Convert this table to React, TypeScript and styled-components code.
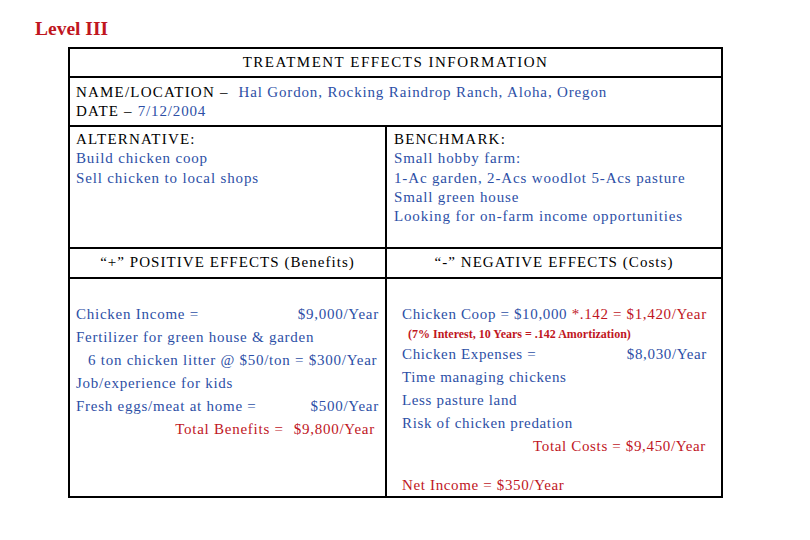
import React from "react";
import styled, { createGlobalStyle } from "styled-components";

const Global = createGlobalStyle`
  html, body { margin: 0; padding: 0; background: #ffffff; }
  body { font-family: "Liberation Serif", "Times New Roman", serif; color: #000; }
`;

const BLUE = "#2d4fa6";
const RED = "#c0161e";

const Page = styled.div`
  width: 810px;
  height: 540px;
  padding: 19px 0 0 35px;
  box-sizing: border-box;
  display: flex;
  flex-direction: column;
`;

const Heading = styled.h1`
  margin: 0;
  font-size: 19.5px;
  line-height: 20px;
  font-weight: bold;
  color: ${RED};
  height: 28px;
`;

const Table = styled.div`
  margin-left: 33px;
  width: 655px;
  box-sizing: border-box;
  border: 2px solid #000;
  display: flex;
  flex-direction: column;
  font-size: 15px;
  letter-spacing: 1.2px;
`;

const TitleRow = styled.div`
  height: 27px;
  border-bottom: 2px solid #000;
  display: flex;
  align-items: center;
  justify-content: center;
  letter-spacing: 1.5px;
`;

const InfoRow = styled.div`
  height: 49px;
  border-bottom: 2px solid #000;
  padding: 5px 6px 0;
  box-sizing: border-box;
  line-height: 18.5px;
`;

const SplitRow = styled.div<{ $h: number; $last?: boolean }>`
  display: grid;
  grid-template-columns: 317px 1fr;
  height: ${(p) => p.$h}px;
  border-bottom: ${(p) => (p.$last ? "none" : "2px solid #000")};
`;

const Cell = styled.div<{ $center?: boolean; $pad?: string }>`
  box-sizing: border-box;
  padding: ${(p) => p.$pad ?? "3px 6px 0"};
  ${(p) =>
    p.$center
      ? "display:flex;align-items:center;justify-content:center;letter-spacing:1.05px;padding-bottom:1px;"
      : ""}
  &:first-child { border-right: 2px solid #000; }
`;

const Line = styled.div`
  line-height: 19.3px;
  white-space: nowrap;
`;

const Blue = styled.span`
  color: ${BLUE};
  letter-spacing: 0.85px;
`;

const Red = styled.span`
  color: ${RED};
`;

const Body = styled.div<{ $right?: boolean }>`
  display: flex;
  flex-direction: column;
  box-sizing: border-box;
  padding: ${(p) => (p.$right ? "24px 14px 0 15px" : "24px 6px 0 6px")};
  &:first-child { border-right: 2px solid #000; }
  letter-spacing: ${(p) => (p.$right ? 0.65 : 0.75)}px;
`;

const ItemRow = styled.div<{
  $c?: "blue" | "red";
  $end?: boolean;
  $indent?: number;
  $mt?: number;
  $mr?: number;
}>`
  display: flex;
  justify-content: ${(p) => (p.$end ? "flex-end" : "space-between")};
  line-height: 23px;
  color: ${(p) => (p.$c === "red" ? RED : BLUE)};
  padding-left: ${(p) => p.$indent ?? 0}px;
  margin-top: ${(p) => p.$mt ?? 0}px;
  margin-right: ${(p) => p.$mr ?? 0}px;
  white-space: nowrap;
  gap: 10px;
`;

const Note = styled.div`
  font-size: 12px;
  font-weight: bold;
  line-height: 17px;
  color: ${RED};
  padding-left: 6px;
  letter-spacing: 0px;
  white-space: nowrap;
`;

export default function App() {
  return (
    <>
      <Global />
      <Page>
        <Heading>Level III</Heading>
        <Table>
          <TitleRow>TREATMENT EFFECTS INFORMATION</TitleRow>
          <InfoRow>
            <div>
              NAME/LOCATION –&nbsp; <Blue>Hal Gordon, Rocking Raindrop Ranch, Aloha, Oregon</Blue>
            </div>
            <div>
              DATE – <Blue>7/12/2004</Blue>
            </div>
          </InfoRow>
          <SplitRow $h={120}>
            <Cell>
              <Line>ALTERNATIVE:</Line>
              <Line><Blue>Build chicken coop</Blue></Line>
              <Line><Blue>Sell chicken to local shops</Blue></Line>
            </Cell>
            <Cell $pad="3px 7px 0">
              <Line>BENCHMARK:</Line>
              <Line><Blue>Small hobby farm:</Blue></Line>
              <Line><Blue>1-Ac garden, 2-Acs woodlot 5-Acs pasture</Blue></Line>
              <Line><Blue>Small green house</Blue></Line>
              <Line><Blue>Looking for on-farm income opportunities</Blue></Line>
            </Cell>
          </SplitRow>
          <SplitRow $h={28}>
            <Cell $center $pad="0">“+” POSITIVE EFFECTS (Benefits)</Cell>
            <Cell $center $pad="0">“-” NEGATIVE EFFECTS (Costs)</Cell>
          </SplitRow>
          <SplitRow $h={217} $last>
            <Body>
              <ItemRow>
                <span>Chicken Income =</span>
                <span>$9,000/Year</span>
              </ItemRow>
              <ItemRow>
                <span>Fertilizer for green house &amp; garden</span>
              </ItemRow>
              <ItemRow $indent={12}>
                <span>6 ton chicken litter @ $50/ton = $300/Year</span>
              </ItemRow>
              <ItemRow>
                <span>Job/experience for kids</span>
              </ItemRow>
              <ItemRow>
                <span>Fresh eggs/meat at home =</span>
                <span>$500/Year</span>
              </ItemRow>
              <ItemRow $c="red" $end $mr={4}>
                <span>Total Benefits =</span>
                <span>$9,800/Year</span>
              </ItemRow>
            </Body>
            <Body $right>
              <ItemRow>
                <span>
                  Chicken Coop = $10,000 <Red>*.142 = $1,420/Year</Red>
                </span>
              </ItemRow>
              <Note>(7% Interest, 10 Years = .142 Amortization)</Note>
              <ItemRow>
                <span>Chicken Expenses =</span>
                <span>$8,030/Year</span>
              </ItemRow>
              <ItemRow>
                <span>Time managing chickens</span>
              </ItemRow>
              <ItemRow>
                <span>Less pasture land</span>
              </ItemRow>
              <ItemRow>
                <span>Risk of chicken predation</span>
              </ItemRow>
              <ItemRow $c="red" $end $mr={1}>
                <span>Total Costs = $9,450/Year</span>
              </ItemRow>
              <ItemRow $c="red" $mt={16}>
                <span>Net Income = $350/Year</span>
              </ItemRow>
            </Body>
          </SplitRow>
        </Table>
      </Page>
    </>
  );
}
